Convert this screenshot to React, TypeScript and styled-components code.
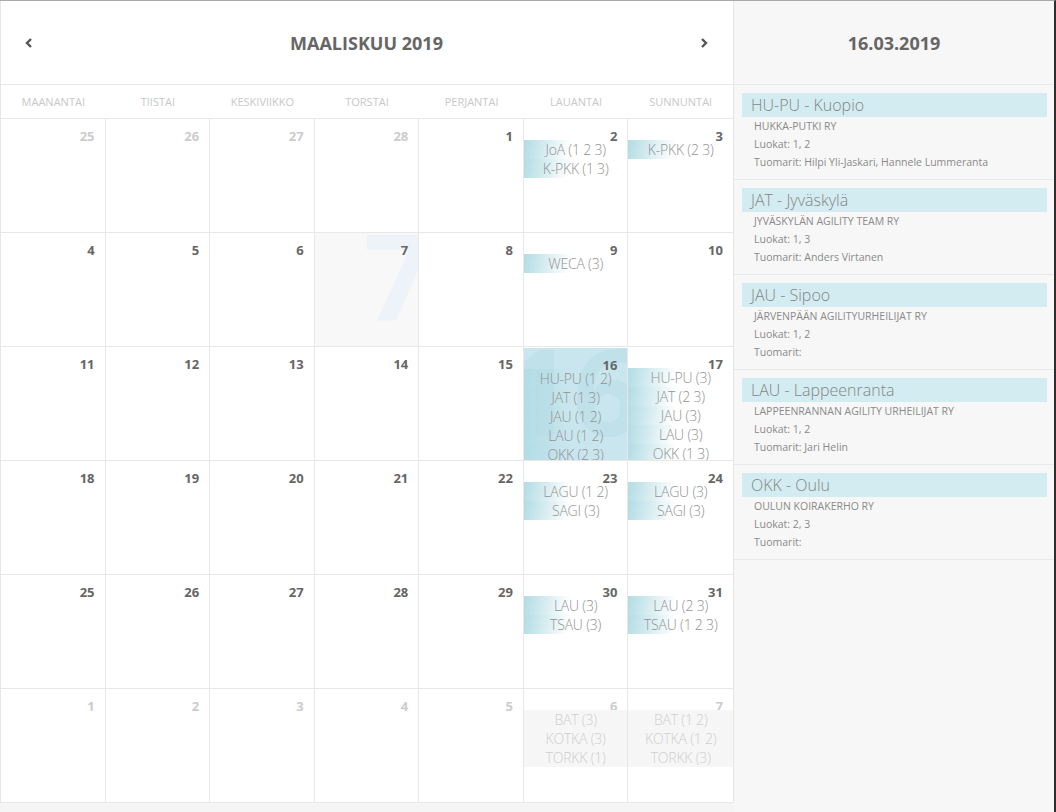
import styled, {createGlobalStyle} from "styled-components";

const GlobalStyle = createGlobalStyle`
  body {
    margin: 0;
    background-color: #f5f5f5;
    font-family: "Open Sans", "Liberation Sans", sans-serif;
  }
`;

type DayEvent = { name: string; classes: string };
type Day = { day: number; muted?: boolean; today?: boolean; selected?: boolean; events?: DayEvent[] };
type Competition = { title: string; club: string; classes: string; judges: string };

const ev = (name: string, classes: string): DayEvent => ({name, classes});

const weekdays = ["Maanantai", "Tiistai", "Keskiviikko", "Torstai", "Perjantai", "Lauantai", "Sunnuntai"];

const days: Day[] = [
    {day: 25, muted: true}, {day: 26, muted: true}, {day: 27, muted: true}, {day: 28, muted: true},
    {day: 1}, {day: 2, events: [ev("JoA", "1 2 3"), ev("K-PKK", "1 3")]}, {day: 3, events: [ev("K-PKK", "2 3")]},
    {day: 4}, {day: 5}, {day: 6}, {day: 7, today: true}, {day: 8},
    {day: 9, events: [ev("WECA", "3")]}, {day: 10},
    {day: 11}, {day: 12}, {day: 13}, {day: 14}, {day: 15},
    {day: 16, selected: true, events: [ev("HU-PU", "1 2"), ev("JAT", "1 3"), ev("JAU", "1 2"), ev("LAU", "1 2"), ev("OKK", "2 3")]},
    {day: 17, events: [ev("HU-PU", "3"), ev("JAT", "2 3"), ev("JAU", "3"), ev("LAU", "3"), ev("OKK", "1 3")]},
    {day: 18}, {day: 19}, {day: 20}, {day: 21}, {day: 22},
    {day: 23, events: [ev("LAGU", "1 2"), ev("SAGI", "3")]}, {day: 24, events: [ev("LAGU", "3"), ev("SAGI", "3")]},
    {day: 25}, {day: 26}, {day: 27}, {day: 28}, {day: 29},
    {day: 30, events: [ev("LAU", "3"), ev("TSAU", "3")]}, {day: 31, events: [ev("LAU", "2 3"), ev("TSAU", "1 2 3")]},
    {day: 1, muted: true}, {day: 2, muted: true}, {day: 3, muted: true}, {day: 4, muted: true}, {day: 5, muted: true},
    {day: 6, muted: true, events: [ev("BAT", "3"), ev("KOTKA", "3"), ev("TORKK", "1")]},
    {day: 7, muted: true, events: [ev("BAT", "1 2"), ev("KOTKA", "1 2"), ev("TORKK", "3")]},
];

const competitions: Competition[] = [
    {title: "HU-PU - Kuopio", club: "HUKKA-PUTKI RY", classes: "1, 2", judges: "Hilpi Yli-Jaskari, Hannele Lummeranta"},
    {title: "JAT - Jyväskylä", club: "JYVÄSKYLÄN AGILITY TEAM RY", classes: "1, 3", judges: "Anders Virtanen"},
    {title: "JAU - Sipoo", club: "JÄRVENPÄÄN AGILITYURHEILIJAT RY", classes: "1, 2", judges: ""},
    {title: "LAU - Lappeenranta", club: "LAPPEENRANNAN AGILITY URHEILIJAT RY", classes: "1, 2", judges: "Jari Helin"},
    {title: "OKK - Oulu", club: "OULUN KOIRAKERHO RY", classes: "2, 3", judges: ""},
];

const StyledPage = styled.div`
  display: flex;
  height: 811px;
  border-top: 1px solid #a8a8a8;
  border-right: 2px solid #2e2e2e;
  box-sizing: content-box;
  overflow: hidden;
`;

const StyledCalendar = styled.div`
  width: 732px;
  flex-shrink: 0;
  align-self: flex-start;
  background-color: #ffffff;
  border-left: 1px solid #e6e6e6;
  border-right: 1px solid #e6e6e6;
`;

const StyledHeader = styled.div`
  height: 83px;
  display: flex;
  align-items: center;
  justify-content: space-between;
  padding: 0 24px 0 23px;
  border-bottom: 1px solid #e8e8e8;
`;

const StyledTitle = styled.div`
  font-size: 18px;
  font-weight: 700;
  color: #666666;
`;

const StyledArrow = styled.svg`
  width: 10px;
  height: 12px;
  color: #555555;
`;

const StyledWeekdays = styled.div`
  display: grid;
  grid-template-columns: repeat(7, 1fr);
  height: 33px;
  border-bottom: 1px solid #e8e8e8;
`;

const StyledWeekday = styled.div`
  display: flex;
  align-items: center;
  justify-content: center;
  font-size: 11px;
  text-transform: uppercase;
  color: #c8c8c8;
`;

const StyledGrid = styled.div`
  display: grid;
  grid-template-columns: repeat(7, 1fr);
  grid-auto-rows: 114px;
`;

const StyledCell = styled.div<{ $today?: boolean; $selected?: boolean; $last?: boolean }>`
  position: relative;
  overflow: hidden;
  border-bottom: 1px solid #e8e8e8;
  border-right: ${props => props.$last ? "none" : "1px solid #e8e8e8"};
  background-color: ${props => props.$selected ? "#c9e6ee" : props.$today ? "#f8f8f8" : "#ffffff"};
  ${props => props.$selected ? "margin-top: 1px;" : ""}
`;

const StyledWatermark = styled.div<{ $selected?: boolean }>`
  position: absolute;
  top: -18px;
  right: -14px;
  font-size: 120px;
  line-height: 120px;
  font-weight: 700;
  color: ${props => props.$selected ? "#c1e1ea" : "#eef2f9"};
  pointer-events: none;
`;

const StyledDayNumber = styled.div<{ $muted?: boolean }>`
  position: relative;
  text-align: right;
  padding: 8px 10px 0 0;
  height: 13px;
  line-height: 18px;
  font-size: 13px;
  font-weight: 700;
  color: ${props => props.$muted ? "#cccccc" : "#666666"};
`;

const StyledEventList = styled.div<{ $muted?: boolean }>`
  position: relative;
  background-color: ${props => props.$muted ? "#f6f6f6" : "transparent"};
`;

const StyledEvent = styled.div<{ $muted?: boolean }>`
  height: 19px;
  line-height: 19px;
  text-align: center;
  font-size: 14px;
  font-weight: 300;
  letter-spacing: -0.2px;
  color: ${props => props.$muted ? "#cfcfcf" : "#929292"};
  background: ${props => props.$muted ? "none" : "linear-gradient(100deg, #b2dce4 0%, rgba(255, 255, 255, 0) 45%)"};
`;

const StyledSidebar = styled.div`
  flex: 1;
  background-color: #f7f7f7;
`;

const StyledSidebarHeader = styled.div`
  height: 83px;
  display: flex;
  align-items: center;
  justify-content: center;
  border-bottom: 1px solid #e8e8e8;
`;

const StyledCompetition = styled.div`
  padding: 8px 7px 8px 8px;
  border-bottom: 1px solid #e8e8e8;
`;

const StyledCompetitionTitle = styled.div`
  height: 24px;
  line-height: 24px;
  padding-left: 9px;
  background-color: #d3ecf1;
  font-size: 16px;
  font-weight: 300;
  color: #858585;
`;

const StyledCompetitionLine = styled.div`
  padding-left: 12px;
  line-height: 18px;
  font-size: 10.5px;
  color: #8a8a8a;
`;

function Arrow({left}: { left?: boolean }) {
    return (
        <StyledArrow viewBox="0 0 10 12">
            <path d={left ? "M7 2 L3 6 L7 10" : "M3 2 L7 6 L3 10"} fill="none" stroke="currentColor" strokeWidth="2.4"/>
        </StyledArrow>
    )
}

function DayCell({day, index}: { day: Day; index: number }) {
    return (
        <StyledCell $today={day.today} $selected={day.selected} $last={index % 7 === 6}>
            {(day.today || day.selected) && <StyledWatermark $selected={day.selected}>{day.day}</StyledWatermark>}
            <StyledDayNumber $muted={day.muted}>{day.day}</StyledDayNumber>
            {day.events &&
                <StyledEventList $muted={day.muted}>
                    {day.events.map((e, i) =>
                        <StyledEvent key={i} $muted={day.muted}>{e.name} ({e.classes})</StyledEvent>)}
                </StyledEventList>}
        </StyledCell>
    )
}

function App() {
    return (
        <StyledPage>
            <GlobalStyle/>
            <StyledCalendar>
                <StyledHeader>
                    <Arrow left/>
                    <StyledTitle>MAALISKUU 2019</StyledTitle>
                    <Arrow/>
                </StyledHeader>
                <StyledWeekdays>
                    {weekdays.map(w => <StyledWeekday key={w}>{w}</StyledWeekday>)}
                </StyledWeekdays>
                <StyledGrid>
                    {days.map((d, i) => <DayCell key={i} day={d} index={i}/>)}
                </StyledGrid>
            </StyledCalendar>
            <StyledSidebar>
                <StyledSidebarHeader>
                    <StyledTitle>16.03.2019</StyledTitle>
                </StyledSidebarHeader>
                {competitions.map(c =>
                    <StyledCompetition key={c.title}>
                        <StyledCompetitionTitle>{c.title}</StyledCompetitionTitle>
                        <StyledCompetitionLine>{c.club}</StyledCompetitionLine>
                        <StyledCompetitionLine>Luokat: {c.classes}</StyledCompetitionLine>
                        <StyledCompetitionLine>Tuomarit: {c.judges}</StyledCompetitionLine>
                    </StyledCompetition>
                )}
            </StyledSidebar>
        </StyledPage>
    )
}

export default App;
